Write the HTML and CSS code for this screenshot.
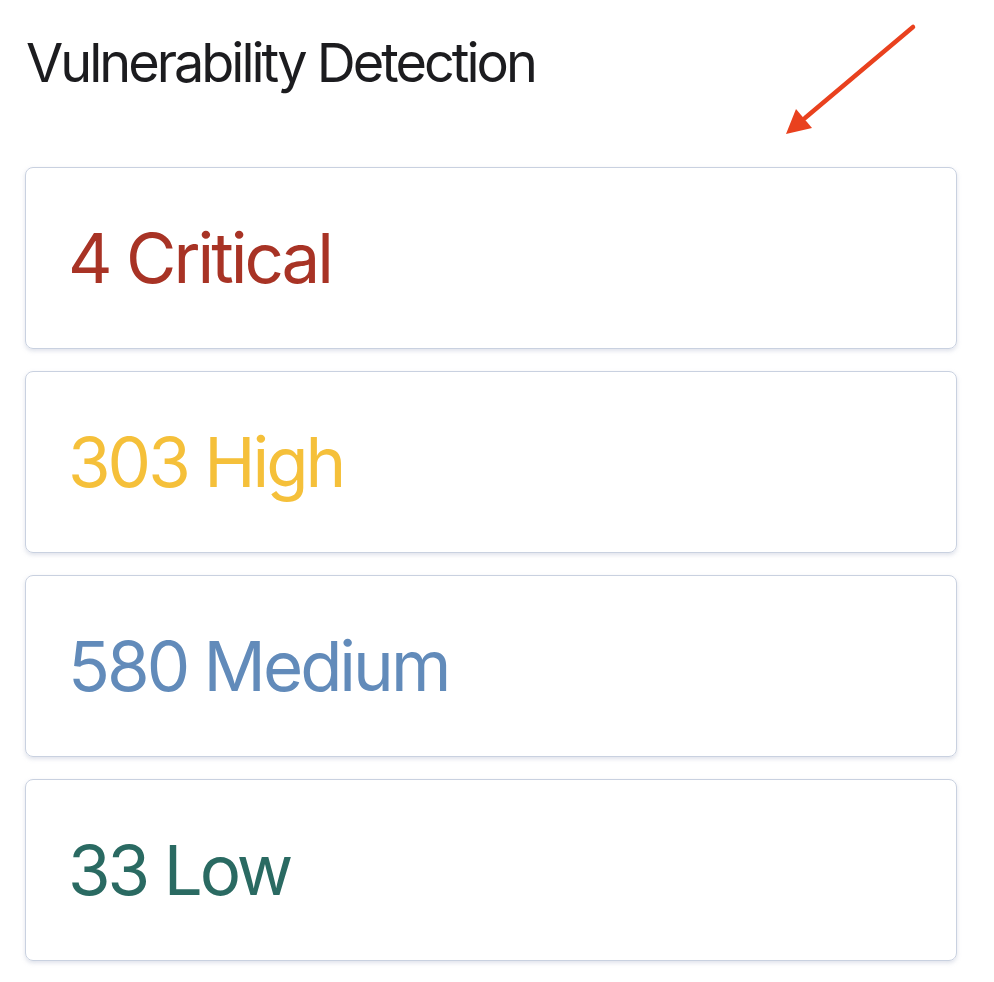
FILE: index.html
```html
<!DOCTYPE html>
<html lang="en">
<head>
    <meta charset="UTF-8">
    <meta name="viewport" content="width=device-width, initial-scale=1.0">
    <title>Vulnerability Detection</title>
    <link rel="stylesheet" href="styles.css">
</head>
<body>
    <div class="panel">
        <h1>Vulnerability Detection</h1>

        <svg class="arrow" width="140" height="130" viewBox="0 0 140 130">
            <line x1="128" y1="17" x2="20" y2="108" stroke="#e9411e" stroke-width="4.5" stroke-linecap="round"/>
            <polygon points="1,124 11,99 27,118" fill="#e9411e"/>
        </svg>

        <div class="cards">
            <div class="card critical">4 Critical</div>
            <div class="card high">303 High</div>
            <div class="card medium">580 Medium</div>
            <div class="card low">33 Low</div>
        </div>
    </div>
</body>
</html>
```

FILE: styles.css
```css
body {
    font-family: Inter, "Noto Sans", sans-serif;
    margin: 0;
    background-color: #ffffff;
}
.panel {
    position: relative;
    padding: 28px 37px 20px 25px;
}
h1 {
    margin: 0 0 0 1px;
    font-size: 54px;
    font-weight: 400;
    color: #1c1c1f;
    line-height: 70px;
    letter-spacing: -3px;
}
.arrow {
    position: absolute;
    left: 785px;
    top: 10px;
}
.cards {
    display: flex;
    flex-direction: column;
    gap: 22px;
    margin-top: 69px;
}
.card {
    height: 180px;
    display: flex;
    align-items: center;
    padding-left: 42px;
    border: 1.5px solid #c9d1e0;
    border-radius: 8px;
    box-shadow: 0 2px 4px rgba(160,170,195,0.35);
    font-size: 69px;
    letter-spacing: -3px;
}
.critical { color: #a83325; }
.high { color: #f5c03a; }
.medium { color: #628bba; }
.low { color: #2a6a62; }
```
